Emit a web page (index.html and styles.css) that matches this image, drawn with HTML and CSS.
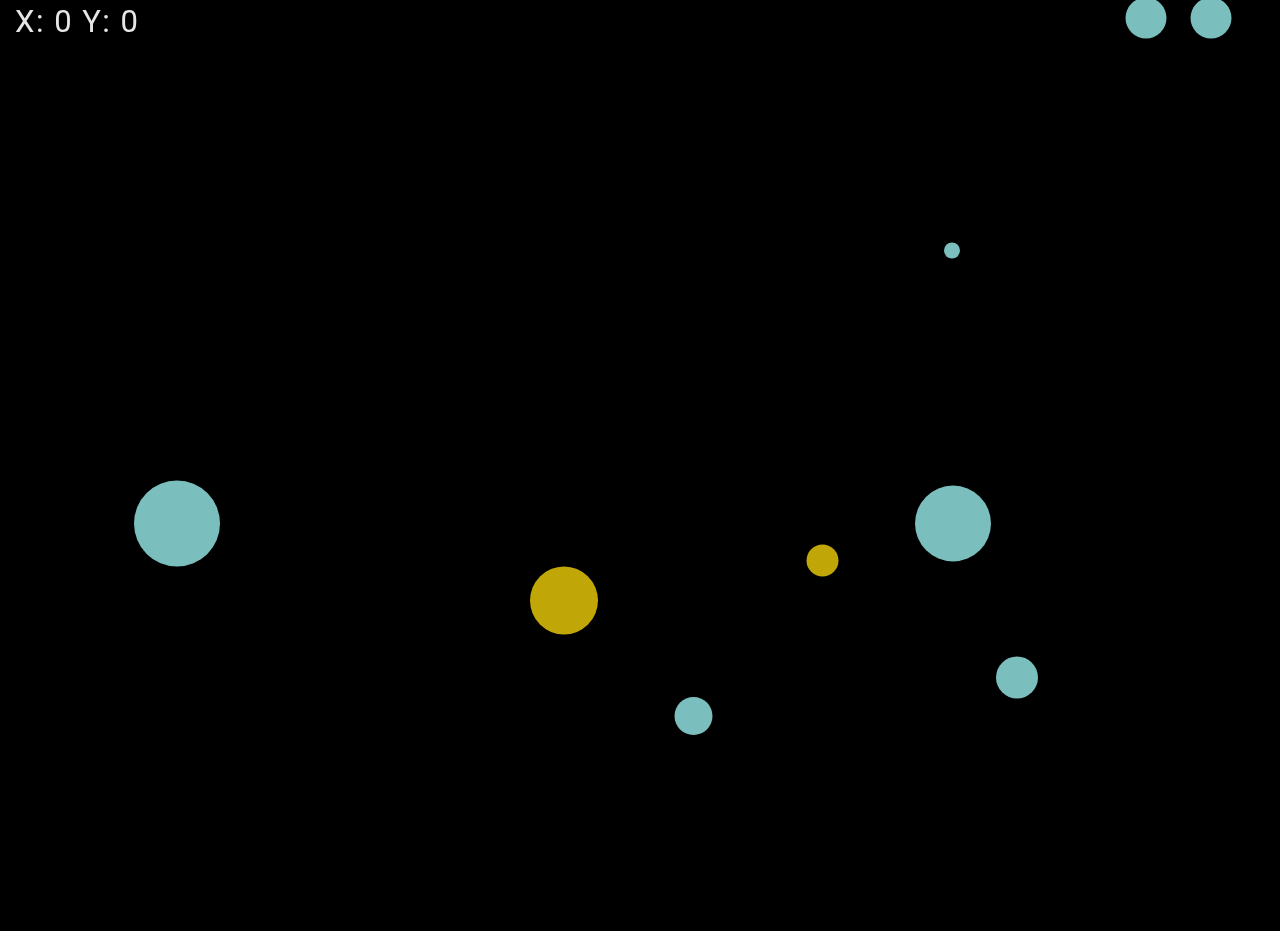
FILE: index.html
```html
<!DOCTYPE html>
<html>
<head>
<meta charset="utf-8">
<link rel="stylesheet" href="styles.css">
</head>
<body>
<div class="stage">
  <svg class="canvas" width="1280" height="931" viewBox="0 0 1280 931">
    <circle class="teal" cx="1146" cy="18" r="20.5"/>
    <circle class="teal" cx="1211" cy="18" r="20.5"/>
    <circle class="teal" cx="952" cy="250.5" r="8"/>
    <circle class="teal" cx="177" cy="523.5" r="43"/>
    <circle class="gold" cx="564" cy="600.5" r="34"/>
    <circle class="gold" cx="822.5" cy="560.5" r="16"/>
    <circle class="teal" cx="953" cy="523.5" r="38"/>
    <circle class="teal" cx="1017" cy="677.5" r="21"/>
    <circle class="teal" cx="693.5" cy="716" r="19"/>
  </svg>
  <div class="coords">X: 0 Y: 0</div>
</div>
</body>
</html>
```
FILE: styles.css
```css
html, body {
  margin: 0;
  padding: 0;
  background: #000;
  overflow: hidden;
}
.stage {
  position: relative;
  width: 1280px;
  height: 931px;
  background: #000;
}
.canvas {
  display: block;
}
.teal { fill: #7bbebe; }
.gold { fill: #c0a606; }
.coords {
  position: absolute;
  left: 15px;
  top: 5px;
  color: #e6e6e6;
  font-family: Roboto, "Liberation Sans", sans-serif;
  font-size: 31px;
  line-height: 34px;
  letter-spacing: 1.5px;
  filter: blur(0.3px);
}
```
